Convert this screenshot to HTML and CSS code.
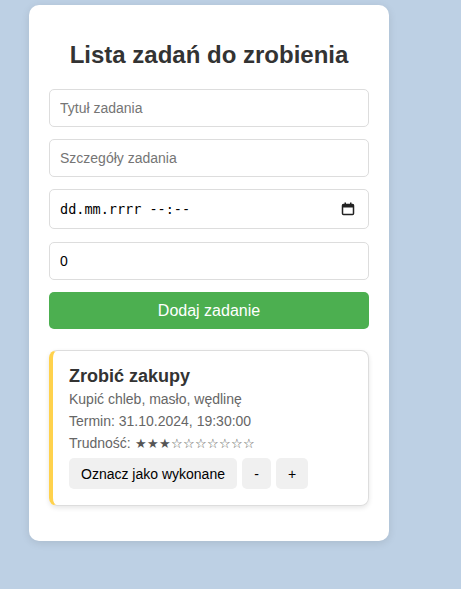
FILE: index.html
```html
<!DOCTYPE html>
<html lang="pl">
<head>
<meta charset="utf-8">
<title>Lista zadań</title>
<link rel="stylesheet" href="styles.css">
</head>
<body>
<div class="container">
  <h1 class="title">Lista zadań do zrobienia</h1>
  <form class="form">
    <input class="field" type="text" placeholder="Tytuł zadania">
    <input class="field" type="text" placeholder="Szczegóły zadania">
    <div class="date-wrap">
      <input class="field date" type="text" placeholder="dd.mm.rrrr --:--">
      <svg class="cal" width="14" height="14" viewBox="0 0 14 14" aria-hidden="true">
        <rect x="1.5" y="2.5" width="11" height="10" rx="1" fill="none" stroke="#222" stroke-width="1.5"/>
        <rect x="1.5" y="2.5" width="11" height="3" fill="#222"/>
        <rect x="3.5" y="0.5" width="1.5" height="3" fill="#222"/>
        <rect x="9" y="0.5" width="1.5" height="3" fill="#222"/>
      </svg>
    </div>
    <input class="field" type="text" value="0">
    <button class="add" type="button">Dodaj zadanie</button>
  </form>
  <div class="task">
    <h3 class="task-title">Zrobić zakupy</h3>
    <p class="task-line">Kupić chleb, masło, wędlinę</p>
    <p class="task-line">Termin: 31.10.2024, 19:30:00</p>
    <p class="task-line rating">Trudność: <span class="stars">★★★☆☆☆☆☆☆☆</span></p>
    <div class="actions">
      <button class="btn" type="button">Oznacz jako wykonane</button>
      <button class="btn small" type="button">-</button>
      <button class="btn small" type="button">+</button>
    </div>
  </div>
</div>
</body>
</html>
```
FILE: styles.css
```css
html, body {
  margin: 0;
  padding: 0;
}
body {
  background: #bdd0e4;
  font-family: "Liberation Sans", Arial, sans-serif;
  color: #333;
  padding: 5px 0 40px 29px;
}
.container {
  width: 320px;
  background: #fff;
  border-radius: 10px;
  padding: 20px 20px 35px;
  box-shadow: 0 2px 8px rgba(0, 0, 0, 0.1);
}
.title {
  margin: 16px 0 20px;
  text-align: center;
  font-size: 24px;
  line-height: 28px;
  color: #333;
}
.form {
  display: flex;
  flex-direction: column;
  gap: 12px;
}
.field {
  box-sizing: border-box;
  width: 320px;
  height: 38px;
  margin: 0;
  padding: 0 10px;
  border: 1px solid #ddd;
  border-radius: 5px;
  font-family: "Liberation Sans", Arial, sans-serif;
  font-size: 14px;
  color: #000;
  background: #fff;
  outline: none;
}
.field::placeholder {
  color: #757575;
}
.date-wrap {
  position: relative;
  height: 40px;
  margin-bottom: 1px;
}
.date {
  height: 40px;
  font-family: "DejaVu Sans Mono", "Liberation Mono", monospace;
  font-size: 13.5px;
}
.date::placeholder {
  color: #000;
}
.cal {
  position: absolute;
  right: 14px;
  top: 13px;
}
.add {
  height: 37px;
  border: none;
  border-radius: 5px;
  background: #4caf50;
  color: #fff;
  font-family: "Liberation Sans", Arial, sans-serif;
  font-size: 16px;
  cursor: pointer;
}
.task {
  margin-top: 21px;
  border: 1px solid #ddd;
  border-left: 4px solid #ffd24d;
  border-radius: 8px;
  padding: 15px 15px 16px 16px;
  box-shadow: 0 2px 5px rgba(0, 0, 0, 0.1);
}
.task-title {
  margin: 0 0 4px;
  font-size: 18px;
  line-height: 21px;
  color: #333;
}
.task-line {
  margin: 0 0 5px;
  font-size: 14px;
  line-height: 17px;
  color: #666;
}
.rating {
  margin-top: 5px;
}
.stars {
  font-size: 13.1px;
  line-height: 14px;
  color: #555;
}
.actions {
  display: flex;
  gap: 5px;
  margin-top: 6px;
}
.btn {
  height: 31px;
  padding: 0 12px;
  border: none;
  border-radius: 5px;
  background: #f0f0f0;
  color: #000;
  font-family: "Liberation Sans", Arial, sans-serif;
  font-size: 14px;
}
.btn.small {
  min-width: 29px;
}
```
